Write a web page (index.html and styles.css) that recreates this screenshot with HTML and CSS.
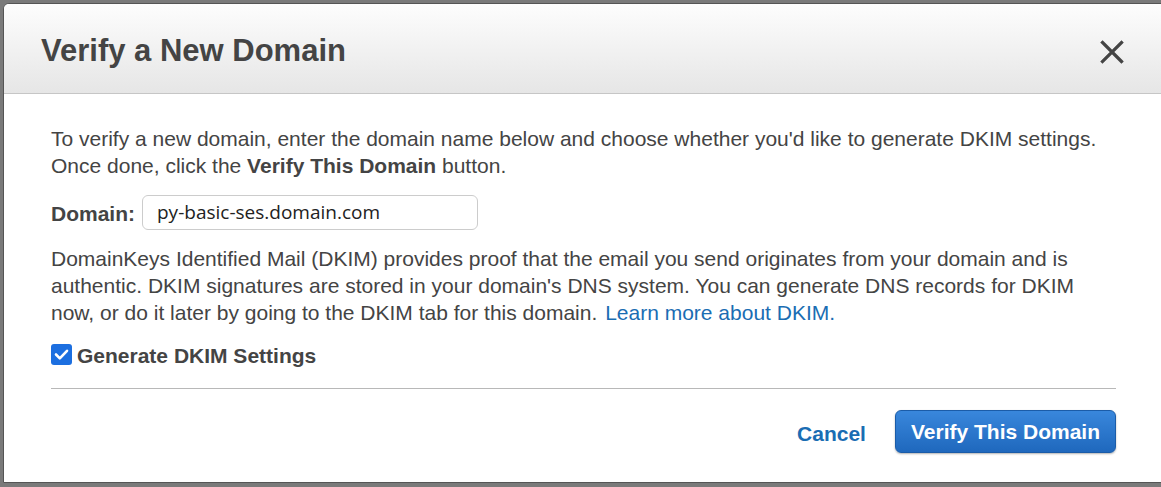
FILE: index.html
```html
<!DOCTYPE html>
<html>
<head>
<meta charset="utf-8">
<link rel="stylesheet" href="styles.css">
</head>
<body>
<div class="dialog">
  <div class="header">
    <h1 class="title">Verify a New Domain</h1>
    <button class="close" aria-label="Close">
      <svg width="24" height="24" viewBox="0 0 24 24"><path d="M2.5 2.5 L21.5 21.5 M21.5 2.5 L2.5 21.5" stroke="#444" stroke-width="3.2" stroke-linecap="square" fill="none"/></svg>
    </button>
  </div>
  <div class="body">
    <p class="intro">To verify a new domain, enter the domain name below and choose whether you'd like to generate DKIM settings. Once done, click the <b>Verify This Domain</b> button.</p>
    <div class="domain-row">
      <label class="domain-label">Domain:</label>
      <div class="input">py-basic-ses.domain.com</div>
    </div>
    <p class="dkim">DomainKeys Identified Mail (DKIM) provides proof that the email you send originates from your domain and is authentic. DKIM signatures are stored in your domain's DNS system. You can generate DNS records for DKIM now, or do it later by going to the DKIM tab for this domain. <a class="link" href="#">Learn more about DKIM.</a></p>
    <div class="check-row">
      <span class="checkbox">
        <svg width="21" height="21" viewBox="0 0 21 21"><path d="M5 10.5 L8.8 14.3 L16 6.8" stroke="#fff" stroke-width="2.6" fill="none" stroke-linecap="round" stroke-linejoin="round"/></svg>
      </span>
      <span class="check-label">Generate DKIM Settings</span>
    </div>
    <div class="separator"></div>
    <div class="footer">
      <a class="cancel" href="#">Cancel</a>
      <button class="primary">Verify This Domain</button>
    </div>
  </div>
</div>
</body>
</html>
```
FILE: styles.css
```css
html, body {
  margin: 0;
  padding: 0;
}
body {
  background: #7a7a7a;
  overflow: hidden;
  height: 487px;
  font-family: "Liberation Sans", Arial, sans-serif;
  color: #444;
}
.dialog {
  margin: 3px 0 0 3px;
  width: 1160px;
  height: 480px;
  box-sizing: border-box;
  background: #fff;
  border: 1px solid #555;
  border-radius: 6px 0 0 0;
  overflow: hidden;
}
.header {
  height: 90px;
  box-sizing: border-box;
  background: linear-gradient(#fdfdfd, #e6e6e6);
  border-bottom: 1px solid #c6c6c6;
  display: flex;
  align-items: center;
  justify-content: space-between;
  padding: 0 38px 0 37px;
}
.title {
  margin: 0;
  font-size: 31px;
  font-weight: bold;
  color: #444;
  position: relative;
  top: 2px;
}
.close {
  border: 0;
  background: none;
  padding: 0;
  width: 24px;
  height: 24px;
  display: flex;
  position: relative;
  top: 3px;
}
.body {
  padding: 31px 46px 0 47px;
  font-size: 21px;
  line-height: 27px;
}
.intro, .dkim {
  margin: 0;
}
.domain-row {
  display: flex;
  align-items: center;
  gap: 7px;
  margin-top: 16px;
  height: 35px;
}
.domain-label {
  font-weight: bold;
  position: relative;
  top: 1px;
}
.input {
  width: 336px;
  height: 35px;
  box-sizing: border-box;
  border: 1px solid #ccc;
  border-radius: 6px;
  padding: 0 14px;
  font-family: "Open Sans", "DejaVu Sans", sans-serif;
  font-size: 19px;
  line-height: 33px;
  color: #222;
}
.dkim {
  margin-top: 15px;
}
.link {
  color: #1a6db3;
  text-decoration: none;
  margin-left: 2px;
}
.check-row {
  display: flex;
  align-items: center;
  gap: 5px;
  margin-top: 15px;
  height: 27px;
}
.checkbox {
  width: 21px;
  height: 21px;
  border-radius: 3px;
  background: #1c6fe0;
  display: flex;
}
.check-label {
  font-weight: bold;
  position: relative;
  top: 1px;
}
.separator {
  height: 1px;
  background: #b8b8b8;
  margin-top: 20px;
}
.footer {
  display: flex;
  justify-content: flex-end;
  align-items: center;
  gap: 29px;
  margin-top: 21px;
}
.cancel {
  color: #1a6db3;
  font-weight: bold;
  text-decoration: none;
  position: relative;
  top: 2px;
}
.primary {
  height: 43px;
  padding: 0 15px;
  border: 1px solid #1b5ca8;
  border-radius: 6px;
  background: linear-gradient(#3987dc, #1f68bd);
  color: #fff;
  font-family: "Liberation Sans", Arial, sans-serif;
  font-size: 21px;
  font-weight: bold;
  box-shadow: 0 1px 2px rgba(0,0,0,0.3);
}
```
